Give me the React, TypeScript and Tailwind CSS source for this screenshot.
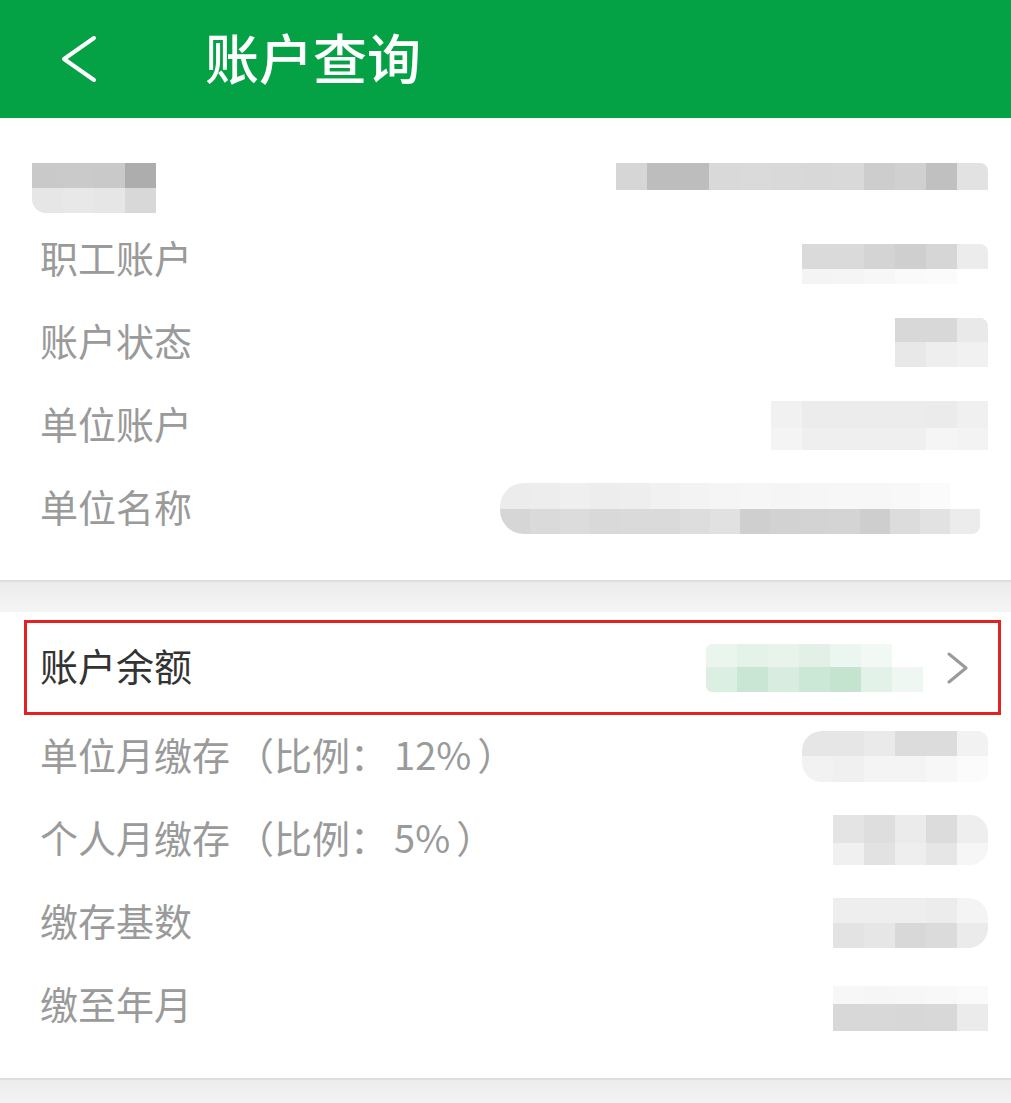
import type { ReactNode } from 'react';

type MosaicProps = {
  rows: { h: number; cells: string[] }[];
  cellW?: number;
  className?: string;
};

// blurred (pixelated) values, drawn as blocks of grey
function Mosaic({ rows, cellW = 31, className = '' }: MosaicProps) {
  return (
    <div className={`flex flex-col overflow-hidden ${className}`}>
      {rows.map((r, i) => (
        <div key={i} className="flex">
          {r.cells.map((c, j) => (
            <div key={j} style={{ width: cellW, height: r.h, background: c }} />
          ))}
        </div>
      ))}
    </div>
  );
}

function Row({ label, children }: { label: ReactNode; children?: ReactNode }) {
  return (
    <div className="flex h-[83px] items-center justify-between pl-[40px] pr-[23px]">
      <span className="pb-[5px] text-[38px] leading-none text-[#9a9a9a]">{label}</span>
      {children}
    </div>
  );
}

function Band() {
  return (
    <div className="h-[32px] border-t-2 border-[#dedede] bg-gradient-to-b from-[#ececec] to-[#f5f5f5]" />
  );
}

export default function App() {
  return (
    <div
      className="w-[1011px] h-[1103px] overflow-hidden bg-white"
      style={{ fontFamily: '"Noto Sans CJK SC", "Noto Sans", sans-serif' }}
    >
      {/* Header */}
      <div className="flex h-[118px] items-center bg-[#04a145]">
        <svg width="40" height="50" viewBox="0 0 40 50" className="ml-[60px]">
          <path d="M34 4 L4 25 L34 46" fill="none" stroke="#fff" strokeWidth="4" strokeLinecap="round" strokeLinejoin="round" />
        </svg>
        <h1 className="ml-[105px] pb-[4px] text-[54px] font-medium leading-none text-white">账户查询</h1>
      </div>

      {/* Section 1 */}
      <div className="pb-[30px]">
        <div className="flex h-[100px] items-start justify-between pl-[32px] pr-[23px] pt-[45px]">
          <Mosaic
            className="rounded-bl-[14px]"
            rows={[
              { h: 25, cells: ['#c9c9c9', '#cacaca', '#c9c9c9', '#adadad'] },
              { h: 25, cells: ['#e6e6e6', '#e8e8e8', '#e6e6e6', '#d8d8d8'] },
            ]}
          />
          <Mosaic
            className="rounded-tr-[8px]"
            rows={[
              {
                h: 27,
                cells: ['#d6d6d6', '#bdbdbd', '#bdbdbd', '#d9d9d9', '#dadada', '#d9d9d9', '#d8d8d8', '#d9d9d9', '#cdcdcd', '#d0d0d0', '#c0c0c0', '#e2e2e2'],
              },
            ]}
          />
        </div>
        <Row label="职工账户">
          <Mosaic
            className="mt-[8px] rounded-tr-[8px]"
            rows={[
              { h: 25, cells: ['#dadada', '#dadada', '#d4d4d4', '#cfcfcf', '#d6d6d6', '#ececec'] },
              { h: 15, cells: ['#f4f4f4', '#f5f5f5', '#f7f7f7', '#fafafa', '#fbfbfb', '#ffffff'] },
            ]}
          />
        </Row>
        <Row label="账户状态">
          <Mosaic
            className="rounded-tr-[8px]"
            rows={[
              { h: 24, cells: ['#d8d8d8', '#d8d8d8', '#e9e9e9'] },
              { h: 25, cells: ['#e8e8e8', '#eeeeee', '#f1f1f1'] },
            ]}
          />
        </Row>
        <Row label="单位账户">
          <Mosaic
            rows={[
              { h: 27, cells: ['#f1f1f1', '#ececec', '#ececec', '#ececec', '#ececec', '#ebebeb', '#f0f0f0'] },
              { h: 22, cells: ['#f4f4f4', '#efefef', '#efefef', '#efefef', '#efefef', '#f5f5f5', '#f3f3f3'] },
            ]}
          />
        </Row>
        <Row label="单位名称">
          <Mosaic
            cellW={30}
            className="mr-[8px] rounded-l-[24px] rounded-br-[8px]"
            rows={[
              {
                h: 26,
                cells: ['#ececec', '#ededed', '#efefef', '#ededed', '#eeeeee', '#f1f1f1', '#f3f3f3', '#f5f5f5', '#f6f6f6', '#f5f5f5', '#f6f6f6', '#f7f7f7', '#f7f7f7', '#f8f8f8', '#fbfbfb', '#ffffff'],
              },
              {
                h: 25,
                cells: ['#d6d6d6', '#dadada', '#dcdcdc', '#d9d9d9', '#dadada', '#dadada', '#dddddd', '#e1e1e1', '#cfcfcf', '#d2d2d2', '#d3d3d3', '#d4d4d4', '#cecece', '#dcdcdc', '#e2e2e2', '#ececec'],
              },
            ]}
          />
        </Row>
      </div>

      <Band />

      {/* Section 2 */}
      <div className="pb-[31px] pt-[8px]">
        <div className="ml-[24px] mr-[10px] flex h-[95px] items-center justify-between border-[3px] border-[#e52222] pl-[13px] pr-[28px]">
          <span className="pb-[5px] text-[38px] leading-none text-[#333333]">账户余额</span>
          <div className="flex items-center gap-[23px]">
            <Mosaic
              className="rounded-l-[6px]"
              rows={[
                { h: 23, cells: ['#eaf5ee', '#e5f2ea', '#e8f3ec', '#e2f0e7', '#ecf6f0', '#f2f9f4', '#ffffff'] },
                { h: 25, cells: ['#dcefe3', '#c8e6d3', '#d8ede0', '#cbe8d6', '#c4e4d0', '#e3f2e8', '#eef7f2'] },
              ]}
            />
            <svg width="24" height="32" viewBox="0 0 24 32">
              <path d="M3 2 L20 16 L3 30" fill="none" stroke="#9a9a9a" strokeWidth="3" strokeLinecap="round" strokeLinejoin="round" />
            </svg>
          </div>
        </div>
        <Row
          label={
            <>
              单位月缴存<span className="ml-[6px]">（</span>比例：<span className="ml-[6px]">12%</span>
              <span className="ml-[6px]">）</span>
            </>
          }
        >
          <Mosaic
            className="rounded-l-[20px] rounded-r-[10px]"
            rows={[
              { h: 25, cells: ['#e6e6e6', '#e6e6e6', '#eaeaea', '#dcdcdc', '#dcdcdc', '#f2f2f2'] },
              { h: 26, cells: ['#f2f2f2', '#f0f0f0', '#f4f4f4', '#f4f4f4', '#f7f7f7', '#fbfbfb'] },
            ]}
          />
        </Row>
        <Row
          label={
            <>
              个人月缴存<span className="ml-[6px]">（</span>比例：<span className="ml-[6px]">5%</span>
              <span className="ml-[6px]">）</span>
            </>
          }
        >
          <Mosaic
            className="rounded-r-[18px]"
            rows={[
              { h: 28, cells: ['#e4e4e4', '#dedede', '#ebebeb', '#dcdcdc', '#eeeeee'] },
              { h: 22, cells: ['#f0f0f0', '#e2e2e2', '#eeeeee', '#e6e6e6', '#f6f6f6'] },
            ]}
          />
        </Row>
        <Row label="缴存基数">
          <Mosaic
            className="rounded-r-[20px]"
            rows={[
              { h: 25, cells: ['#eeeeee', '#eeeeee', '#eeeeee', '#ececec', '#f4f4f4'] },
              { h: 25, cells: ['#e3e3e3', '#e6e6e6', '#d8d8d8', '#dbdbdb', '#ebebeb'] },
            ]}
          />
        </Row>
        <Row label="缴至年月">
          <Mosaic
            className="mt-[6px]"
            rows={[
              { h: 18, cells: ['#f7f7f7', '#f6f6f6', '#f7f7f7', '#f8f8f8', '#fafafa'] },
              { h: 27, cells: ['#d8d8d8', '#d8d8d8', '#d7d7d7', '#d8d8d8', '#ebebeb'] },
            ]}
          />
        </Row>
      </div>

      <Band />
    </div>
  );
}
